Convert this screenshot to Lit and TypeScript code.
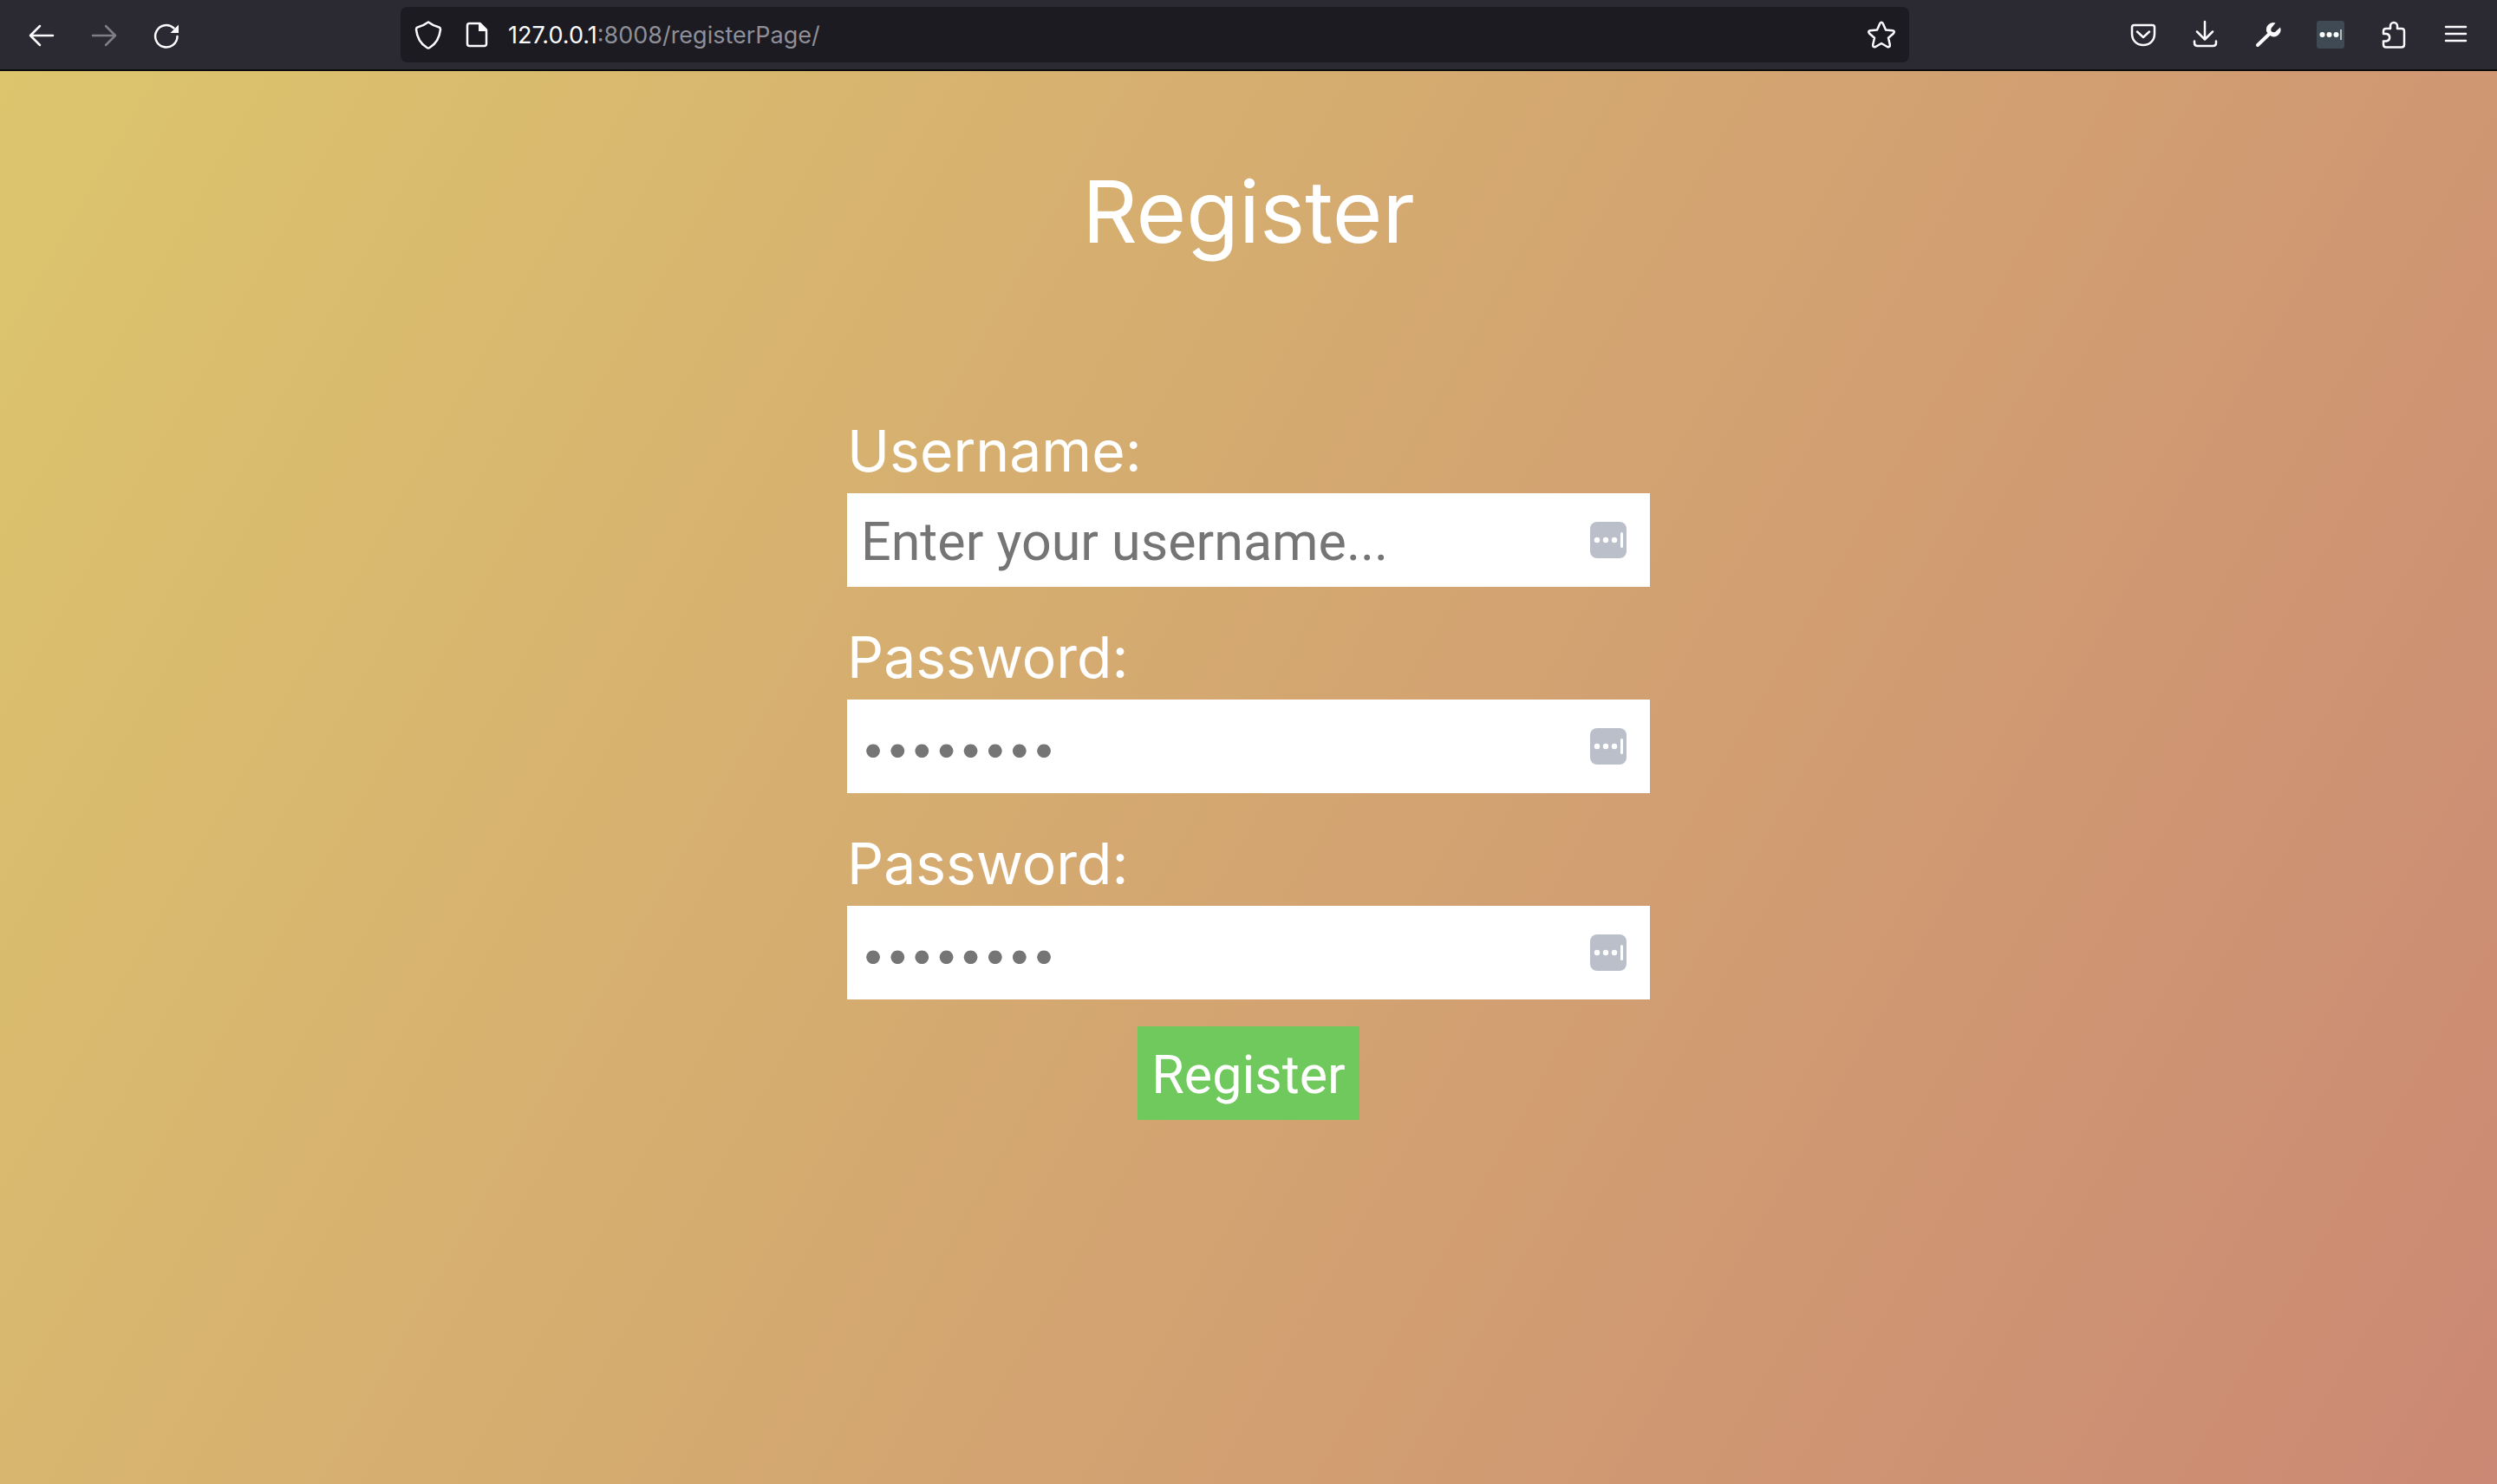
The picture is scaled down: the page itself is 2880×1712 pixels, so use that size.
import { LitElement, html, css, svg } from "lit";
import { customElement, property } from "lit/decorators.js";

const line = (d: string) => svg`<path d=${d} fill="none" stroke="currentColor" stroke-width="2.5" stroke-linecap="round" stroke-linejoin="round"/>`;

const icons: Record<string, unknown> = {
  back: line("M29 17H3M14 6L3 17L14 28"),
  forward: line("M3 17H29M18 6L29 17L18 28"),
  reload: svg`<path d="M28.500 18A12.700 12.700 0 1 1 24.500 8.500" fill="none" stroke="currentColor" stroke-width="2.5" stroke-linecap="round"/><path d="M30 4.500V14H20.500Z" fill="currentColor"/>`,
  shield: line("M16 1.500C12 4.500 8 6.500 3.500 7.500Q2 8 2 10C3 19 6 26 14.500 31Q16 32 17.500 31C26 26 29 19 30 10Q30 8 28.500 7.500C24 6.500 20 4.500 16 1.500Z"),
  page: svg`${line("M7.500 3H19.500L27 10.500V26.500Q27 29 24.500 29H7.500Q5 29 5 26.500V5.500Q5 3 7.500 3Z")}<path d="M18 3V12H27L20 3Z" fill="currentColor"/>`,
  star: line("M14.200 3.200Q16 0.500 17.800 3.200L21 10.500L29 11.200Q32 12 30 14.500L24 19.800L25.800 27.500Q26 31 22.800 30L16 26L9.200 30Q6 31 6.200 27.500L8 19.800L2 14.500Q0 12 3 11.200L11 10.500Z"),
  pocket: line("M5.500 5H26.500Q29 5 29 7.500V15C29 22.500 23.500 28 16 28S3 22.500 3 15V7.500Q3 5 5.500 5ZM9 12.500L16 19L23 12.500"),
  download: line("M15 1V21M6 12.500L15 21.500L24 12.500M3 23.500V25.500Q3 29 6.500 29H24.500Q28 29 28 25.500V23.500"),
  wrench: svg`<path d="M4 28L17 15.500" stroke="currentColor" stroke-width="4" stroke-linecap="round"/><path d="M24.500 2.500A8 8 0 0 0 14.500 13L19 17.500A8 8 0 0 0 30 7.500L24 13Q20.500 13.500 19.500 12Q18.500 10.500 20 8Z" fill="currentColor"/>`,
  puzzle: line("M13 9V6A4 4 0 0 1 21 6V9H26Q29 9 29 12V27.500Q29 30.500 26 30.500H8Q5 30.500 5 27.500V23.500H8.500A4.300 4.300 0 0 0 8.500 15H5V12Q5 9 8 9Z"),
  menu: line("M5 7H28M5 15H28M5 23H28"),
};

@customElement("ui-icon")
export class UiIcon extends LitElement {
  static styles = css`
    :host { display: block; width: 32px; height: 32px; }
    svg { display: block; width: 100%; height: 100%; overflow: visible; }
  `;
  @property() name = "";
  render() {
    return html`<svg viewBox="0 0 32 32" aria-hidden="true">${icons[this.name]}</svg>`;
  }
}

@customElement("browser-bar")
export class BrowserBar extends LitElement {
  static styles = css`
    :host {
      display: flex;
      align-items: center;
      justify-content: space-between;
      height: 80px;
      padding: 0 32px;
      background: #2b2a33;
      border-bottom: 2px solid #0c0c0d;
      color: #fbfbfe;
      font-family: Inter, sans-serif;
    }
    .group { display: flex; gap: 40px; }
    button { display: block; padding: 0; border: 0; background: none; color: inherit; }
    button:disabled { color: #7f7e85; }
    .address {
      display: flex;
      align-items: center;
      box-sizing: border-box;
      flex: 0 1 1740px;
      height: 64px;
      padding: 0 16px;
      gap: 20px;
      border-radius: 8px;
      background: #1c1b22;
    }
    .identity { display: flex; gap: 24px; }
    .url { flex: 1; padding-top: 2px; font-size: 27px; line-height: 40px; color: #8f8f98; }
    .host { color: #fbfbfe; }
    .manager { display: block; width: 32px; height: 32px; }
  `;
  render() {
    return html`
      <nav class="group" aria-label="History">
        <button aria-label="Back"><ui-icon name="back"></ui-icon></button>
        <button aria-label="Forward" disabled><ui-icon name="forward"></ui-icon></button>
        <button aria-label="Reload"><ui-icon name="reload"></ui-icon></button>
      </nav>
      <div class="address">
        <div class="identity">
          <button aria-label="Tracking protection"><ui-icon name="shield"></ui-icon></button>
          <button aria-label="Site information"><ui-icon name="page"></ui-icon></button>
        </div>
        <div class="url"><span class="host">127.0.0.1</span>:8008/registerPage/</div>
        <button aria-label="Bookmark"><ui-icon name="star"></ui-icon></button>
      </div>
      <div class="group">
        <button aria-label="Pocket"><ui-icon name="pocket"></ui-icon></button>
        <button aria-label="Downloads"><ui-icon name="download"></ui-icon></button>
        <button aria-label="Tools"><ui-icon name="wrench"></ui-icon></button>
        <button aria-label="Password manager">
          <svg class="manager" viewBox="0 0 32 32">
            <rect width="32" height="32" rx="3" fill="#3f4a54" />
            <circle cx="6.500" cy="16" r="3" fill="#fff" />
            <circle cx="14.500" cy="16" r="3" fill="#fff" />
            <circle cx="22.500" cy="16" r="3" fill="#fff" />
            <rect x="27" y="10" width="2" height="12" fill="#b4b9be" />
          </svg>
        </button>
        <button aria-label="Extensions"><ui-icon name="puzzle"></ui-icon></button>
        <button aria-label="Menu"><ui-icon name="menu"></ui-icon></button>
      </div>
    `;
  }
}

@customElement("form-field")
export class FormField extends LitElement {
  static styles = css`
    :host { display: block; }
    label { display: block; padding-bottom: 2px; font-size: 66px; line-height: 94px; color: #fff; }
    .box { display: flex; align-items: center; height: 108px; padding: 0 27px 0 16px; background: #fff; }
    input {
      flex: 1;
      min-width: 0;
      padding: 4px 0 0;
      border: 0;
      outline: 0;
      background: none;
      font-family: Roboto, sans-serif;
      font-size: 61px;
      line-height: 76px;
      color: #222;
    }
    input[type="password"] { font-family: Inter, sans-serif; font-size: 50px; }
    input::placeholder { color: #757575; opacity: 1; }
    .fill { display: block; padding: 0; border: 0; background: none; }
    .badge { display: block; width: 42px; height: 42px; }
  `;
  @property() label = "";
  @property() type = "text";
  @property() placeholder = "";
  render() {
    return html`
      <label for="field">${this.label}</label>
      <div class="box">
        <input id="field" type=${this.type} placeholder=${this.placeholder} />
        <button class="fill" type="button" aria-label="Fill from password manager">
          <svg class="badge" viewBox="0 0 42 42">
            <rect width="42" height="42" rx="8" fill="#bbbfc9" />
            <circle cx="8" cy="21" r="3.200" fill="#fff" />
            <circle cx="18" cy="21" r="3.200" fill="#fff" />
            <circle cx="28" cy="21" r="3.200" fill="#fff" />
            <rect x="35" y="12" width="3" height="18" rx="1.500" fill="#fff" />
          </svg>
        </button>
      </div>
    `;
  }
}

@customElement("app-root")
export class AppRoot extends LitElement {
  static styles = css`
    :host { display: flex; flex-direction: column; min-height: 100vh; font-family: Inter, sans-serif; }
    main {
      flex: 1;
      display: flex;
      flex-direction: column;
      align-items: center;
      padding: 90px 32px;
      background: linear-gradient(120deg, #dcc56d, #cb8874);
    }
    h1 { margin: 0 0 157px; font-size: 99px; line-height: 144px; font-weight: 400; color: #fff; }
    form { display: flex; flex-direction: column; align-items: center; gap: 31px; width: 100%; }
    .fields { display: flex; flex-direction: column; gap: 34px; width: 100%; max-width: 926px; }
    .submit {
      height: 108px;
      padding: 4px 16px 0;
      border: 0;
      background: #70c95c;
      color: #fff;
      font-family: Roboto, sans-serif;
      font-size: 61px;
      line-height: 76px;
    }
  `;
  render() {
    return html`
      <browser-bar></browser-bar>
      <main>
        <h1>Register</h1>
        <form @submit=${(e: Event) => e.preventDefault()}>
          <div class="fields">
            <form-field label="Username:" placeholder="Enter your username..."></form-field>
            <form-field label="Password:" type="password" placeholder="••••••••"></form-field>
            <form-field label="Password:" type="password" placeholder="••••••••"></form-field>
          </div>
          <button class="submit">Register</button>
        </form>
      </main>
    `;
  }
}
